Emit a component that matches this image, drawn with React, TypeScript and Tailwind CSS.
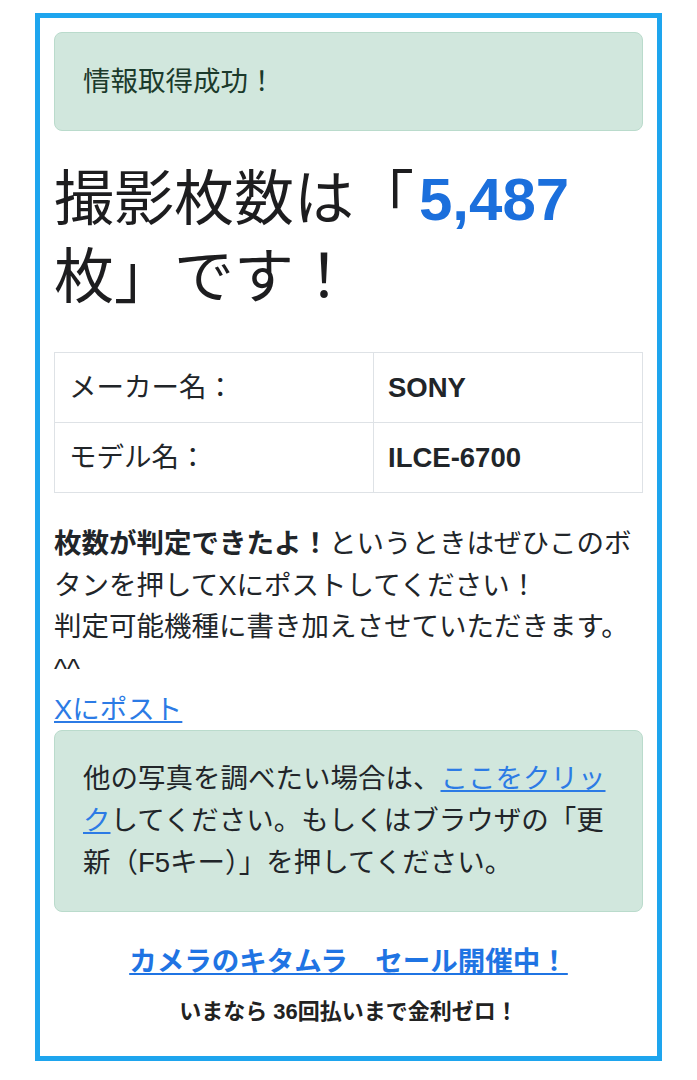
import React from 'react';

const font = "font-['Liberation_Sans','Noto_Sans_CJK_JP',sans-serif]";

export default function App() {
  return (
    <div className={`min-h-screen bg-white pt-[13px] text-[#212529] ${font}`}>
      <div className="mx-[35px] border-[5px] border-[#1ea5ee] p-[14px]">
        {/* success alert */}
        <div className="rounded-[8px] border border-[#badbcc] bg-[#d1e7dd] px-[28px] py-[28px] text-[27.5px] leading-[41px] text-[#1b3a2b]">
          情報取得成功！
        </div>

        <h2 className="mt-[30px] text-[60px] font-normal leading-[78px] text-[#1d1d1f]">
          撮影枚数は「<span className="ml-[5px] font-bold text-[#1b6fdc]">5,487</span>枚」です！
        </h2>

        <table className="mt-[35px] w-full border-collapse text-[27.5px] leading-[41px]">
          <tbody>
            <tr>
              <td className="w-[319px] border border-[#dee2e6] px-[14px] py-[14px]">メーカー名：</td>
              <td className="border border-[#dee2e6] px-[14px] py-[14px] font-bold">SONY</td>
            </tr>
            <tr>
              <td className="w-[319px] border border-[#dee2e6] px-[14px] py-[14px]">モデル名：</td>
              <td className="border border-[#dee2e6] px-[14px] py-[14px] font-bold">ILCE-6700</td>
            </tr>
          </tbody>
        </table>

        <p className="mt-[30px] text-[27.5px] leading-[41.5px]">
          <strong>枚数が判定できたよ！</strong>というときはぜひこのボタンを押してXにポストしてください！
          <br />
          判定可能機種に書き加えさせていただきます。^^
        </p>
        <a href="#" className="block w-fit text-[27.5px] leading-[41px] text-[#2c7be5] underline">
          Xにポスト
        </a>

        {/* info alert */}
        <div className="rounded-[8px] border border-[#badbcc] bg-[#d1e7dd] px-[28px] py-[27px] text-[27.5px] leading-[42px] text-[#212529]">
          他の写真を調べたい場合は、
          <a href="#" className="text-[#2c7be5] underline">ここをクリック</a>
          してください。もしくはブラウザの「更新（F5キー）」を押してください。
        </div>

        <div className="mt-[29px] text-center">
          <a href="#" className="text-[27.5px] font-bold leading-[41px] text-[#1f74e3] underline">
            カメラのキタムラ　セール開催中！
          </a>
        </div>
        <p className="mt-[13px] mb-[14px] text-center text-[22px] font-bold leading-[33px] text-[#222]">
          いまなら 36回払いまで金利ゼロ！
        </p>
      </div>
    </div>
  );
}
